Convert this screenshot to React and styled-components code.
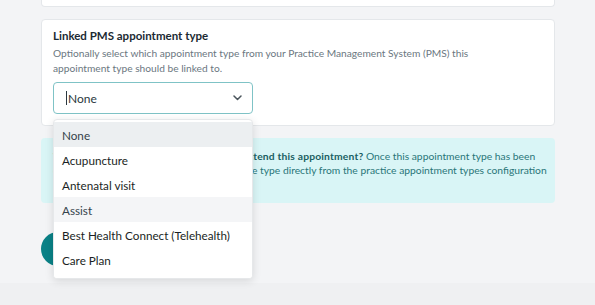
import React from 'react';
import styled, { createGlobalStyle } from 'styled-components';

const GlobalStyle = createGlobalStyle`
  html, body {
    margin: 0;
    padding: 0;
    background: #f3f4f6;
    font-family: Lato, "Liberation Sans", sans-serif;
    -webkit-font-smoothing: antialiased;
  }
`;

const Page = styled.main`
  width: 595px;
  height: 305px;
  overflow: hidden;
  display: flex;
  flex-direction: column;
  background: #f3f4f6;
`;

const Content = styled.div`
  width: 514px;
  margin-left: 41px;
  display: flex;
  flex-direction: column;
`;

const CardStub = styled.div`
  height: 6px;
  background: #fff;
  border: 1px solid #e4e7ea;
  border-top: none;
  border-radius: 0 0 4px 4px;
`;

const Card = styled.section`
  margin-top: 12px;
  background: #fff;
  border: 1px solid #e4e7ea;
  border-radius: 4px;
  padding: 8px 11px 11px;
  display: flex;
  flex-direction: column;
`;

const Title = styled.h3`
  margin: 0;
  font-size: 11.5px;
  font-weight: 700;
  line-height: 15px;
  color: #1b2a33;
`;

const Description = styled.p`
  margin: 3px 0 0;
  font-size: 10.2px;
  line-height: 15px;
  color: #6b777f;
  width: 430px;
`;

const SelectWrap = styled.div`
  position: relative;
  margin-top: 6px;
  width: 200px;
`;

const SelectBox = styled.div`
  height: 30px;
  border: 1px solid #7fc3c6;
  border-radius: 4px;
  display: flex;
  align-items: center;
  justify-content: space-between;
  padding: 0 10px 0 12px;
  font-size: 12px;
  color: #2b3840;
`;

const Caret = styled.span`
  width: 1px;
  height: 14px;
  background: #2b3840;
  margin-right: 1px;
`;

const Value = styled.span`
  display: flex;
  align-items: center;
`;

const Menu = styled.ul`
  position: absolute;
  top: 37px;
  left: 0;
  width: 200px;
  height: 160px;
  margin: 0;
  padding: 2px 0 0;
  list-style: none;
  background: #fff;
  border: 1px solid #e6e8ea;
  border-radius: 4px;
  box-sizing: border-box;
  box-shadow: 0 2px 8px rgba(0, 0, 0, 0.12);
  overflow: hidden;
  z-index: 10;
`;

const Option = styled.li`
  height: 25px;
  display: flex;
  align-items: center;
  padding-left: 8px;
  font-size: 11.7px;
  color: ${(p) => (p.$tone ? '#34434b' : '#1a1f24')};
  background: ${(p) =>
    p.$tone === 'selected' ? '#eceff1' : p.$tone === 'hover' ? '#f4f5f7' : '#fff'};
`;

const Info = styled.div`
  margin-top: 12px;
  background: #d9f5f6;
  border-radius: 4px;
  padding: 11px 12px 10px;
  font-size: 10.3px;
  line-height: 14px;
  color: #2a7579;
  height: 65px;
  box-sizing: border-box;

  p {
    margin: 0;
    white-space: nowrap;
  }

  strong {
    color: #1a5f63;
    font-weight: 700;
    letter-spacing: 0.18px;
  }
`;

const SaveButton = styled.button`
  margin-top: 29px;
  width: 90px;
  height: 34px;
  border: none;
  border-radius: 17px;
  background: #0a8186;
  color: #fff;
  font-family: inherit;
  font-size: 12px;
  font-weight: 700;
`;

const Footer = styled.div`
  margin-top: auto;
  height: 22px;
  background: #eff0f2;
`;

const options = [
  { label: 'None', tone: 'selected' },
  { label: 'Acupuncture' },
  { label: 'Antenatal visit' },
  { label: 'Assist', tone: 'hover' },
  { label: 'Best Health Connect (Telehealth)' },
  { label: 'Care Plan' },
  { label: 'Cardiology review' },
];

function Chevron() {
  return (
    <svg width="9" height="6" viewBox="0 0 9 6" fill="none">
      <path d="M1 1l3.5 3.5L8 1" stroke="#4b555c" strokeWidth="1.5" strokeLinecap="round" strokeLinejoin="round" />
    </svg>
  );
}

export default function App() {
  return (
    <Page>
      <GlobalStyle />
      <Content>
        <CardStub />
        <Card>
          <Title>Linked PMS appointment type</Title>
          <Description>
            Optionally select which appointment type from your Practice Management System (PMS) this
            appointment type should be linked to.
          </Description>
          <SelectWrap>
            <SelectBox>
              <Value>
                <Caret />
                None
              </Value>
              <Chevron />
            </SelectBox>
            <Menu>
              {options.map((o) => (
                <Option key={o.label} $tone={o.tone}>
                  {o.label}
                </Option>
              ))}
            </Menu>
          </SelectWrap>
        </Card>
        <Info>
          <p>
            <strong>Want to choose which practitioners can attend this appointment?</strong> Once this appointment type has been
            <br />
            created, you can manage practitioners for the type directly from the practice appointment types configuration
            <br />
            page.
          </p>
        </Info>
        <SaveButton>Save</SaveButton>
      </Content>
      <Footer />
    </Page>
  );
}
